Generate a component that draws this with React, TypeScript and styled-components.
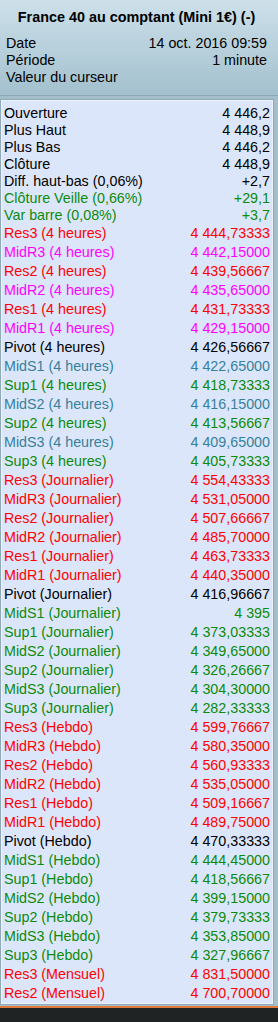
import React from "react";
import styled, { createGlobalStyle } from "styled-components";

const Global = createGlobalStyle`
  html, body { margin: 0; padding: 0; background: #202324; }
  body { font-family: "Liberation Sans", Arial, sans-serif; font-size: 14.3px; }
`;

const Frame = styled.div`
  width: 278px;
  height: 1022px;
  display: flex;
  flex-direction: column;
  background: #202324;
  overflow: hidden;
`;

const Window = styled.div`
  background: #a4becc;
  display: flex;
  flex-direction: column;
  padding-bottom: 2px;
  border-bottom: 2px solid #e07a3c;
`;

const Header = styled.div`
  height: 96px;
  box-sizing: border-box;
  padding: 9px 11px 0 6px;
  background: linear-gradient(to bottom, #cde0ea 0%, #b6cfdb 55%, #a3c0ce 100%);
  border-bottom: 1px solid #8ba6b4;
  color: #000;
`;

const Title = styled.div`
  font-weight: bold;
  font-size: 14.4px;
  line-height: 17px;
  text-align: center;
  margin-bottom: 9px;
  white-space: nowrap;
`;

const InfoRow = styled.div`
  display: flex;
  justify-content: space-between;
  line-height: 17px;
  height: 17px;
`;

const Panel = styled.div`
  margin: 4px 5px 0 1px;
  background: #dce6fa;
  border: 1px solid #eef3f8;
  box-shadow: 0 0 0 1px #8fa9b7;
  padding: 4px 2px 0 2px;
  display: flex;
  flex-direction: column;
`;

const Row = styled.div<{ $c: string; $h: number }>`
  display: flex;
  justify-content: space-between;
  height: ${(p) => p.$h}px;
  line-height: ${(p) => p.$h}px;
  color: ${(p) => p.$c};
  white-space: nowrap;
`;

const K = "#000000";
const G = "#0c8a0c";
const R = "#ff0000";
const M = "#ff00ff";
const T = "#35819a";

const top: [string, string, string][] = [
  ["Ouverture", "4 446,2", K],
  ["Plus Haut", "4 448,9", K],
  ["Plus Bas", "4 446,2", K],
  ["Clôture", "4 448,9", K],
  ["Diff. haut-bas (0,06%)", "+2,7", K],
  ["Clôture Veille (0,66%)", "+29,1", G],
  ["Var barre (0,08%)", "+3,7", G],
];

const rest: [string, string, string][] = [
  ["Res3 (4 heures)", "4 444,73333", R],
  ["MidR3 (4 heures)", "4 442,15000", M],
  ["Res2 (4 heures)", "4 439,56667", R],
  ["MidR2 (4 heures)", "4 435,65000", M],
  ["Res1 (4 heures)", "4 431,73333", R],
  ["MidR1 (4 heures)", "4 429,15000", M],
  ["Pivot (4 heures)", "4 426,56667", K],
  ["MidS1 (4 heures)", "4 422,65000", T],
  ["Sup1 (4 heures)", "4 418,73333", G],
  ["MidS2 (4 heures)", "4 416,15000", T],
  ["Sup2 (4 heures)", "4 413,56667", G],
  ["MidS3 (4 heures)", "4 409,65000", T],
  ["Sup3 (4 heures)", "4 405,73333", G],
  ["Res3 (Journalier)", "4 554,43333", R],
  ["MidR3 (Journalier)", "4 531,05000", R],
  ["Res2 (Journalier)", "4 507,66667", R],
  ["MidR2 (Journalier)", "4 485,70000", R],
  ["Res1 (Journalier)", "4 463,73333", R],
  ["MidR1 (Journalier)", "4 440,35000", R],
  ["Pivot (Journalier)", "4 416,96667", K],
  ["MidS1 (Journalier)", "4 395", G],
  ["Sup1 (Journalier)", "4 373,03333", G],
  ["MidS2 (Journalier)", "4 349,65000", G],
  ["Sup2 (Journalier)", "4 326,26667", G],
  ["MidS3 (Journalier)", "4 304,30000", G],
  ["Sup3 (Journalier)", "4 282,33333", G],
  ["Res3 (Hebdo)", "4 599,76667", R],
  ["MidR3 (Hebdo)", "4 580,35000", R],
  ["Res2 (Hebdo)", "4 560,93333", R],
  ["MidR2 (Hebdo)", "4 535,05000", R],
  ["Res1 (Hebdo)", "4 509,16667", R],
  ["MidR1 (Hebdo)", "4 489,75000", R],
  ["Pivot (Hebdo)", "4 470,33333", K],
  ["MidS1 (Hebdo)", "4 444,45000", G],
  ["Sup1 (Hebdo)", "4 418,56667", G],
  ["MidS2 (Hebdo)", "4 399,15000", G],
  ["Sup2 (Hebdo)", "4 379,73333", G],
  ["MidS3 (Hebdo)", "4 353,85000", G],
  ["Sup3 (Hebdo)", "4 327,96667", G],
  ["Res3 (Mensuel)", "4 831,50000", R],
  ["Res2 (Mensuel)", "4 700,70000", R],
];

export default function App() {
  return (
    <Frame>
      <Global />
      <Window>
        <Header>
          <Title>France 40 au comptant (Mini 1€) (-)</Title>
          <InfoRow>
            <span>Date</span>
            <span>14 oct. 2016 09:59</span>
          </InfoRow>
          <InfoRow>
            <span>Période</span>
            <span>1 minute</span>
          </InfoRow>
          <InfoRow>
            <span>Valeur du curseur</span>
            <span></span>
          </InfoRow>
        </Header>
        <Panel>
          {top.map(([l, v, c]) => (
            <Row key={l} $c={c} $h={17}>
              <span>{l}</span>
              <span>{v}</span>
            </Row>
          ))}
          {rest.map(([l, v, c]) => (
            <Row key={l} $c={c} $h={19}>
              <span>{l}</span>
              <span>{v}</span>
            </Row>
          ))}
        </Panel>
      </Window>
    </Frame>
  );
}
